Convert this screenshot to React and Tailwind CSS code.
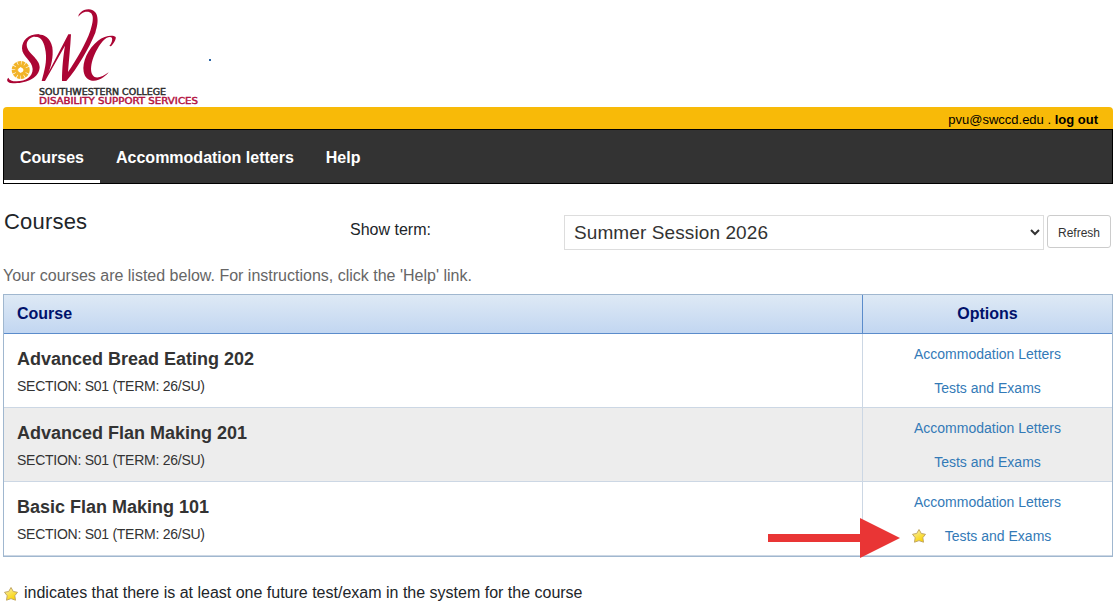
import React from 'react';

const courses = [
  { name: 'Advanced Bread Eating 202', hasTest: false },
  { name: 'Advanced Flan Making 201', hasTest: false },
  { name: 'Basic Flan Making 101', hasTest: true },
];

function Star() {
  return (
    <svg width="16" height="16" viewBox="0 0 16 16" className="block shrink-0">
      <defs>
        <linearGradient id="starFill" x1="0" y1="0" x2="0.6" y2="1">
          <stop offset="0" stopColor="#fdf8cc" />
          <stop offset="0.5" stopColor="#f9e25a" />
          <stop offset="1" stopColor="#fbd404" />
        </linearGradient>
      </defs>
      <path
        d="M8 1.500 L10.300 5.500 L14.500 6.300 L11.800 9.700 L12.500 14.200 L8 12.600 L3.500 14.200 L4.200 9.700 L1.500 6.300 L5.700 5.500 Z"
        fill="url(#starFill)"
        stroke="#c2a763"
        strokeWidth="1"
        strokeLinejoin="round"
      />
    </svg>
  );
}

function Logo() {
  return (
    <svg width="220" height="107" viewBox="0 0 220 107" className="block">
      <g transform="scale(0.33333)" fill="#ab0534">
        {/* S */}
        <path d="M118 103 C88 101 66 120 66 145 C66 170 97 182 98 207 C98 230 78 244 50 244 C36 244 28 241 25 233 C19 238 20 246 32 249 C72 254 118 236 119 202 C119 174 80 160 80 134 C81 118 95 108 118 109 Z" />
        {/* W with the tall flourish */}
        <path d="M104 105 C120 100 150 104 157 142 C161 170 153 203 144 220 L205 103 L213 103 C211 140 207 180 204 216 C230 178 258 130 271 92 C281 62 284 35 261 35 C248 35 240 43 236 50 C233 44 246 28 266 28 C298 30 297 66 286 98 C267 145 232 205 199 243 L186 243 C186 205 190 165 195 137 L135 243 L125 243 C134 210 141 185 137 155 C133 127 124 109 104 110 Z" />
        {/* C */}
        <path d="M333 139 C341 130 349 118 347 111 C338 103 312 108 294 122 C264 146 246 186 251 215 C256 244 285 250 310 232 C318 226 324 221 326 217 C306 232 284 240 276 222 C266 198 286 150 308 124 C318 112 332 108 336 114 C338 120 335 130 328 138 Z" />
      </g>
      {/* sun */}
      <circle cx="20.700" cy="70" r="6" fill="none" stroke="#f2b429" strokeWidth="6" strokeDasharray="2.640 0.500" />
      <circle cx="20.700" cy="70" r="4" fill="none" stroke="#f2b429" strokeWidth="3" />
      <path d="M20.700 67V73M17.700 70H23.700" stroke="#fff" strokeWidth="0.800" />
      <g fontFamily="DejaVu Sans, sans-serif" fontSize="9" strokeWidth="0.450">
        <text x="39" y="95" textLength="127" lengthAdjust="spacingAndGlyphs" fill="#2b2b2b" stroke="#2b2b2b">SOUTHWESTERN COLLEGE</text>
        <text x="39" y="104" textLength="159" lengthAdjust="spacingAndGlyphs" fill="#b3123f" stroke="#b3123f">DISABILITY SUPPORT SERVICES</text>
      </g>
      <rect x="209" y="59" width="2" height="2" fill="#2a64a5" />
    </svg>
  );
}

function CourseRow({ course, shaded }) {
  return (
    <div className={`flex h-[74px] border-b border-[#ccd7e4] ${shaded ? 'bg-[#ededed]' : 'bg-white'}`}>
      <div className="flex-1 pl-[13px] pt-[12px] text-[#333]">
        <h3 className="text-[18px] leading-[26px] font-bold">{course.name}</h3>
        <p className="mt-[4px] text-[14px] leading-[20px] tracking-[-0.26px]">SECTION: S01 (TERM: 26/SU)</p>
      </div>
      <div className="flex w-[250px] flex-col items-center gap-[14px] border-l border-[#ccd7e4] pt-[10px] text-[14px] leading-[20px] text-[#337ab7]">
        <a>Accommodation Letters</a>
        <span className={`flex items-center ${course.hasTest ? 'mr-[13px]' : ''}`}>
          {course.hasTest && <span className="mr-[18px]"><Star /></span>}
          <a>Tests and Exams</a>
        </span>
      </div>
    </div>
  );
}

export default function App() {
  return (
    <div className="relative h-[604px] w-[1113px] overflow-hidden bg-white pl-[3px] font-['Liberation_Sans',Arial,sans-serif] text-[#212529]">
      <header>
        <div className="-ml-[3px] h-[107px]"><Logo /></div>
        <div className="flex h-[22px] items-center justify-end rounded-t-[4px] bg-[#f8ba08] pr-[15px] pt-[3px] text-[13px] text-black">
          <span>pvu@swccd.edu .&nbsp;</span>
          <a className="font-bold">log out</a>
        </div>
        <nav className="flex h-[55px] border border-black bg-[#333] text-[16px] font-bold text-white">
          <a className="flex w-[96px] items-center justify-center border-b-[3px] border-white pt-[5px]">Courses</a>
          <a className="flex items-center px-[16px] pt-[2px]">Accommodation letters</a>
          <a className="flex items-center px-[16px] pt-[2px]">Help</a>
        </nav>
      </header>

      <div className="flex h-[79px] pt-[23px]">
        <h1 className="w-[347px] pl-px text-[22px] leading-[30px] tracking-[0.2px]">Courses</h1>
        <label className="w-[214px] pt-[11px] text-[16px] leading-[24px]">Show term:</label>
        <div className="mt-[8px] flex h-[35px] w-[480px] items-center justify-between border border-[#ddd] pl-[9px] pr-[3px] text-[19px] text-[#333]">
          <span className="pt-[2px] tracking-[0.1px]">Summer Session 2026</span>
          <svg width="10" height="7" viewBox="0 0 10 7" fill="none" stroke="#333" strokeWidth="2">
            <path d="M1 1L5 5L9 1" />
          </svg>
        </div>
        <button className="ml-[3px] mt-[8px] h-[33px] w-[64px] rounded-[3px] border border-[#ccc] pt-[2px] text-[12px] text-[#333]">Refresh</button>
      </div>

      <main>
        <p className="h-[31px] pt-px text-[16px] leading-[24px] text-[#666]">Your courses are listed below. For instructions, click the 'Help' link.</p>
        <section className="w-[1110px] border border-[#a0b7cf]">
          <div className="flex h-[39px] border-b border-[#5b8ccb] bg-linear-to-b from-[#dee9f5] to-[#c2d6f1] text-[16px] leading-[37px] font-bold text-[#00126b]">
            <div className="flex-1 pl-[13px]">Course</div>
            <div className="w-[250px] border-l border-[#5b8ccb] text-center">Options</div>
          </div>
          {courses.map((course, i) => (
            <CourseRow key={course.name} course={course} shaded={i % 2 === 1} />
          ))}
        </section>
        <p className="mt-[24px] flex items-center text-[16px] leading-[24px]">
          <span className="mr-[5px] pt-[2px]"><Star /></span>
          indicates that there is at least one future test/exam in the system for the course
        </p>
      </main>

      {/* callout arrow */}
      <svg width="132" height="40" viewBox="0 0 132 40" className="absolute left-[768px] top-[518px]">
        <path d="M0 16H92V0L132 20L92 40V24H0Z" fill="#e93535" />
      </svg>
    </div>
  );
}
